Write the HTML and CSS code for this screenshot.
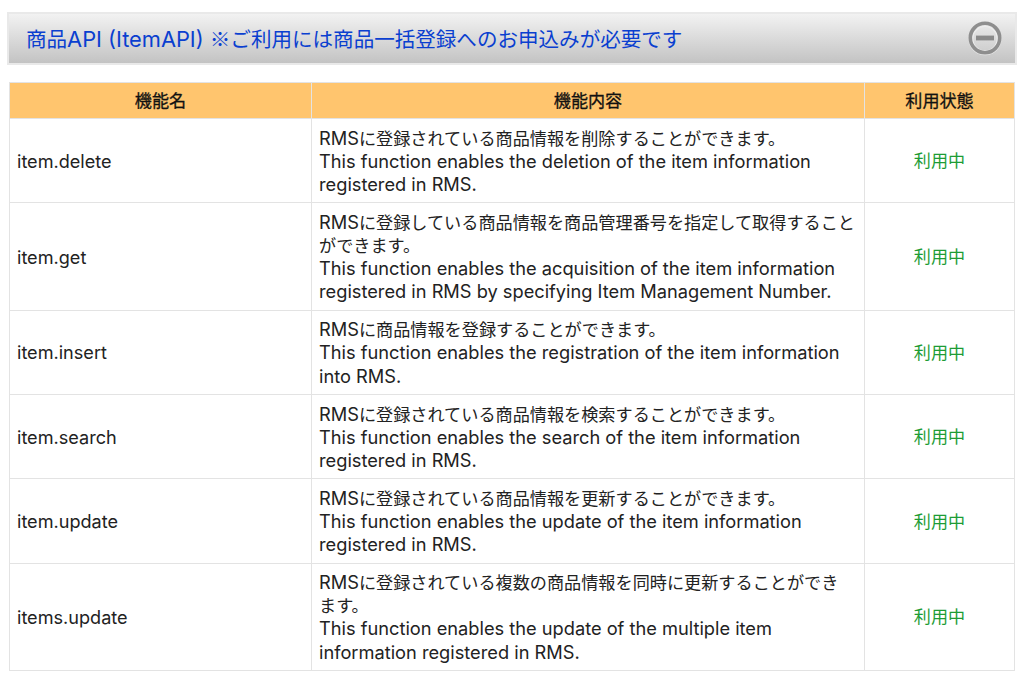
FILE: index.html
```html
<!DOCTYPE html>
<html lang="ja">
<head>
<meta charset="utf-8">
<title>商品API (ItemAPI)</title>
<link rel="stylesheet" href="styles.css">
</head>
<body>
<div class="panel">
  <h2 class="panel-title"><span class="ja">商品</span>API (ItemAPI) <span class="ja">※ご利用には商品一括登録へのお申込みが必要です</span></h2>
  <svg class="collapse-icon" width="36" height="36" viewBox="0 0 36 36" aria-hidden="true">
    <circle cx="18" cy="18.8" r="15.8" fill="none" stroke="#ececec" stroke-width="1.4"/>
    <circle cx="18" cy="18.7" r="12.3" fill="none" stroke="#ececec" stroke-width="1.4"/>
    <circle cx="18" cy="18" r="14.7" fill="none" stroke="#8e8e8e" stroke-width="3.6"/>
    <rect x="9" y="15.6" width="18" height="4.8" fill="#8a8a8a"/>
  </svg>
</div>
<table class="api-table">
  <colgroup><col class="col-name"><col class="col-desc"><col class="col-status"></colgroup>
  <thead>
    <tr><th>機能名</th><th>機能内容</th><th>利用状態</th></tr>
  </thead>
  <tbody>
    <tr><td>item.delete</td><td>RMS<span class="ja">に登録されている商品情報を削除することができます。</span><br>This function enables the deletion of the item information registered in RMS.</td><td class="status">利用中</td></tr>
    <tr><td>item.get</td><td>RMS<span class="ja">に登録している商品情報を商品管理番号を指定して取得することができます。</span><br>This function enables the acquisition of the item information registered in RMS by specifying Item Management Number.</td><td class="status">利用中</td></tr>
    <tr><td>item.insert</td><td>RMS<span class="ja">に商品情報を登録することができます。</span><br>This function enables the registration of the item information into RMS.</td><td class="status">利用中</td></tr>
    <tr><td>item.search</td><td>RMS<span class="ja">に登録されている商品情報を検索することができます。</span><br>This function enables the search of the item information registered in RMS.</td><td class="status">利用中</td></tr>
    <tr><td>item.update</td><td>RMS<span class="ja">に登録されている商品情報を更新することができます。</span><br>This function enables the update of the item information registered in RMS.</td><td class="status">利用中</td></tr>
    <tr><td>items.update</td><td>RMS<span class="ja">に登録されている複数の商品情報を同時に更新することができ<br>ます。</span><br>This function enables the update of the multiple item information registered in RMS.</td><td class="status">利用中</td></tr>
  </tbody>
</table>
</body>
</html>
```
FILE: styles.css
```css
html, body { margin: 0; padding: 0; background: #fff; }
body {
  padding: 12px 7px 0;
  font-family: Inter, "Noto Sans CJK JP", sans-serif;
  color: #222;
  font-size: 18.1px;
  line-height: 23.07px;
  overflow: hidden;
}
.ja { font-family: "Noto Sans CJK JP", sans-serif; font-size: 17.15px; line-height: 1; }
.panel {
  box-sizing: border-box;
  height: 53px;
  width: 1010px;
  border: 2px solid #e9e9e9;
  background: linear-gradient(#f2f2f2, #c3c3c3);
  display: flex;
  align-items: center;
  justify-content: space-between;
  padding: 0 12px 0 17px;
}
.panel-title {
  margin: 0;
  font-size: 21.8px;
  font-weight: normal;
  color: #0a3fd0;
  line-height: 26px;
}
.panel-title .ja { font-size: 20.55px; }
.collapse-icon { flex: none; margin-bottom: 2px; }
.api-table {
  margin: 17px 0 0 2px;
  width: 1005px;
  table-layout: fixed;
  border-collapse: collapse;
  border: 1px solid #e3e3e3;
}
.col-name { width: 302px; }
.col-desc { width: 553px; }
.col-status { width: 150px; }
.api-table th, .api-table td {
  border: 1px solid #e3e3e3;
  padding: 7.67px 7px 6.47px;
}
.api-table td:nth-child(2) { font-size: 18.24px; }
.api-table th {
  background: #ffc56e;
  font-family: "Noto Sans CJK JP", sans-serif;
  font-size: 17.1px;
  font-weight: normal;
  color: #111;
  padding: 5px 7px 7px;
  -webkit-text-stroke: 0.3px #111;
}
.api-table .status { font-family: "Noto Sans CJK JP", sans-serif; font-size: 17.1px; text-align: center; color: #1d9c35; padding: 6px 7px 8px; }
```
